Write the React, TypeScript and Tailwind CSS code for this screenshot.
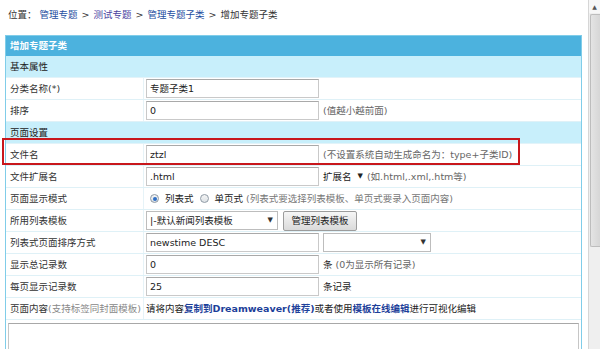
import type { ReactNode } from "react";

const font = "font-['DejaVu_Sans','Noto_Sans_CJK_SC',sans-serif]";

function Row({ label, children, section, className = "" }: { label: ReactNode; children?: ReactNode; section?: boolean; className?: string }) {
  if (section) {
    return (
      <div className="flex h-[22px] items-center border-b border-[#e2f3f9] bg-[#c8effb] pl-[4px] text-[#222]">
        {label}
      </div>
    );
  }
  return (
    <div className={`relative grid h-[22px] grid-cols-[138px_1fr] border-b border-[#dff1f7] bg-white ${className}`}>
      <div className="flex items-center border-r border-[#e6f3f8] pl-[4px] text-[#333]">{label}</div>
      <div className="flex items-center gap-[4px] pl-[2px]">{children}</div>
    </div>
  );
}

function Input({ value, w = "w-[173px]" }: { value: string; w?: string }) {
  return (
    <div className={`flex h-[19px] ${w} items-center border border-[#c9c9c9] border-t-[#a9a9a9] bg-white pl-[3px] text-[#222]`}>
      {value}
    </div>
  );
}

function Select({ value, w }: { value: string; w: string }) {
  return (
    <div className={`flex h-[19px] ${w} items-center justify-between border border-[#bdbdbd] bg-white pl-[3px] pr-[4px] text-[#222]`}>
      <span>{value}</span>
      <span className="text-[7px] text-[#333]">▼</span>
    </div>
  );
}

function Radio({ on }: { on?: boolean }) {
  return (
    <span className="grid size-[9px] place-items-center rounded-full border border-[#8f9aa5] bg-gradient-to-b from-[#f4f4f4] to-[#dde2e6]">
      {on && <span className="size-[4px] rounded-full bg-[#2f6fc6]" />}
    </span>
  );
}

export default function App() {
  return (
    <div className={`flex h-[349px] w-[600px] overflow-hidden bg-white text-[9.5px] leading-none ${font}`}>
      <div className="min-w-0 flex-1">
        <div className="flex h-[35px] items-start pl-[8px] pt-[10px] text-[#333]">
          <span>位置：</span>
          <span className="ml-[3px] text-[#1d4ea1]">管理专题</span>
          <span className="mx-[4px]">&gt;</span>
          <span className="text-[#4a3f9f]">测试专题</span>
          <span className="mx-[4px]">&gt;</span>
          <span className="text-[#1d4ea1]">管理专题子类</span>
          <span className="mx-[4px]">&gt;</span>
          <span>增加专题子类</span>
        </div>

        <div className="ml-[5px] mr-[6px] border border-b-0 border-[#80cde9]">
          <div className="flex h-[20px] items-center bg-[#4cb2de] pl-[4px] font-bold text-white">增加专题子类</div>
          <Row section label="基本属性" />
          <Row label="分类名称(*)">
            <Input value="专题子类1" />
          </Row>
          <Row label="排序">
            <Input value="0" />
            <span className="text-[#666]">(值越小越前面)</span>
          </Row>
          <Row section label="页面设置" />
          <Row label="文件名">
            <Input value="ztzl" />
            <span className="text-[#666]">(不设置系统自动生成命名为：type+子类ID)</span>
            <div className="pointer-events-none absolute top-[-6px] left-[-4px] h-[27px] w-[518px] border-2 border-[#c8171c]" />
          </Row>
          <Row label="文件扩展名">
            <Input value=".html" />
            <span className="flex items-center gap-[6px] text-[#222]">
              扩展名<span className="text-[7px]">▼</span>
            </span>
            <span className="text-[#666]">(如.html,.xml,.htm等)</span>
          </Row>
          <Row label="页面显示模式">
            <span className="ml-[4px] flex items-center gap-[6px]">
              <Radio on />
              <span className="text-[#222]">列表式</span>
              <Radio />
              <span className="text-[#222]">单页式</span>
              <span className="-ml-[3px] text-[#777]">(列表式要选择列表模板、单页式要录入页面内容)</span>
            </span>
          </Row>
          <Row label="所用列表模板">
            <Select value="|-默认新闻列表模板" w="w-[132px]" />
            <div className="ml-[1px] flex h-[20px] w-[74px] items-center justify-center rounded-[2px] border border-[#9c9c9c] bg-gradient-to-b from-[#f6f6f6] to-[#dadada] text-[#222]">
              管理列表模板
            </div>
          </Row>
          <Row label="列表式页面排序方式">
            <Input value="newstime DESC" />
            <Select value="" w="w-[108px]" />
          </Row>
          <Row label="显示总记录数">
            <Input value="0" />
            <span className="text-[#222]">条</span>
            <span className="-ml-[1px] text-[#666]">(0为显示所有记录)</span>
          </Row>
          <Row label="每页显示记录数">
            <Input value="25" />
            <span className="text-[#222]">条记录</span>
          </Row>
          <Row label={<span>页面内容<span className="text-[#888]">(支持标签同封面模板)</span></span>}>
            <span className="text-[#222]">
              请将内容<b className="text-[#1d3f9a]">复制到Dreamweaver(推荐)</b>或者使用<b className="text-[#1d3f9a]">模板在线编辑</b>进行可视化编辑
            </span>
          </Row>
          <div className="h-[40px] bg-white px-[2px] pt-[3px]">
            <div className="h-full border border-[#c6c6c6] border-t-[#a8a8a8]" />
          </div>
        </div>
      </div>

      <div className="flex w-[12px] flex-col border-l border-[#d6d6d6] bg-[#efefef]">
        <div className="flex h-[13px] items-center justify-center bg-[#f7f7f7] text-[6px] text-[#555]">▲</div>
        <div className="ml-[1px] mt-[1px] h-[233px] rounded-l-[2px] border border-r-0 border-[#bdbdbd] bg-gradient-to-r from-[#e4e4e4] to-[#d6d6d6]" />
      </div>
    </div>
  );
}
